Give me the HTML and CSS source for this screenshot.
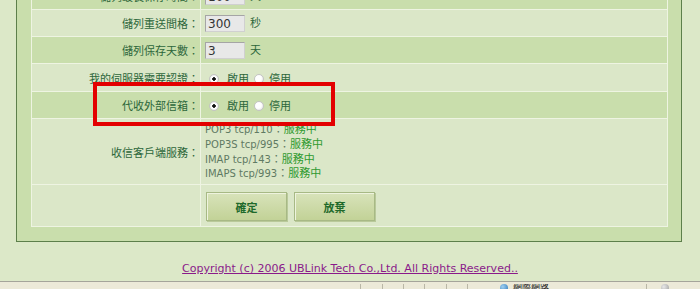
FILE: index.html
```html
<!DOCTYPE html>
<html lang="zh-Hant">
<head>
  <meta charset="UTF-8" />
  <title>郵件伺服器設定</title>
  <link rel="stylesheet" href="styles.css">
</head>
<body>
  <div class="panel">
    <table class="settings">
      <tr class="alt">
        <th>儲列最長保存時間：</th>
        <td><input type="text" class="box" value="100" /> 天</td>
      </tr>
      <tr>
        <th>儲列重送間格：</th>
        <td><input type="text" class="box" value="300" /> 秒</td>
      </tr>
      <tr class="alt">
        <th>儲列保存天數：</th>
        <td><input type="text" class="box" value="3" /> 天</td>
      </tr>
      <tr class="row27">
        <th>我的伺服器需要認證：</th>
        <td><label><input type="radio" name="auth" checked />啟用</label><label class="off"><input type="radio" name="auth" />停用</label></td>
      </tr>
      <tr class="alt">
        <th>代收外部信箱：</th>
        <td><label><input type="radio" name="fetch" checked />啟用</label><label class="off"><input type="radio" name="fetch" />停用</label></td>
      </tr>
      <tr class="services">
        <th>收信客戶端服務：</th>
        <td>
          <div>POP3 tcp/110<span class="cjk">：</span><span class="ok">服務中</span></div>
          <div>POP3S tcp/995<span class="cjk">：</span><span class="ok">服務中</span></div>
          <div>IMAP tcp/143<span class="cjk">：</span><span class="ok">服務中</span></div>
          <div>IMAPS tcp/993<span class="cjk">：</span><span class="ok">服務中</span></div>
        </td>
      </tr>
      <tr class="actions">
        <th></th>
        <td><button>確定</button><button>放棄</button></td>
      </tr>
    </table>
    <div class="highlight"></div>
  </div>

  <p class="footer"><a href="#">Copyright (c) 2006 UBLink Tech Co.,Ltd. All Rights Reserved..</a></p>

  <div class="statusbar">
    <span class="cell wide"></span>
    <span class="cell"></span>
    <span class="cell"></span>
    <span class="cell"></span>
    <span class="cell"></span>
    <span class="cell"></span>
    <span class="cell zone"><span class="globe"></span>網際網路</span>
    <span class="cell last"><span class="globe grey"></span></span>
  </div>
</body>
</html>
```

FILE: styles.css
```css
html, body {
  margin: 0;
  padding: 0;
  height: 289px;
  overflow: hidden;
}

body {
  background: #dce8c8;
  font-family: 'Liberation Sans', 'Noto Sans CJK TC', sans-serif;
  font-size: 11px;
  color: #2c663a;
}

.panel {
  position: relative;
  margin: -32px 0 0 16px;
  width: 666px;
  padding: 14px 13px 14px 14px;
  box-sizing: border-box;
  background: #c9deac;
  border: 1px solid #5d7f4b;
  border-top: none;
}

.settings {
  width: 100%;
  border-spacing: 1px;
  background: #eef4e2;
}

.settings th,
.settings td {
  height: 26px;
  padding: 0;
  background: #dbe7c8;
  vertical-align: middle;
}

.settings th {
  width: 167px;
  text-align: right;
  font-weight: normal;
  padding-right: 1px;
  color: #2c663a;
}

.settings td {
  padding-left: 4px;
  color: #2c663a;
}

.settings .alt th,
.settings .alt td {
  background: #c9deac;
}

.settings .row27 th,
.settings .row27 td {
  height: 27px;
}

.box {
  width: 40px;
  height: 17px;
  box-sizing: border-box;
  margin: 0 2px 0 0;
  padding: 0 2px;
  font: 12px 'DejaVu Sans', sans-serif;
  color: #333;
  background: #e8e8e8;
  border: 1px solid #a5a5a5;
  border-right-color: #d0d0d0;
  border-bottom-color: #d0d0d0;
  vertical-align: middle;
}

input[type="radio"] {
  appearance: none;
  box-sizing: border-box;
  width: 10px;
  height: 10px;
  margin: 0 8px 0 4px;
  border-radius: 50%;
  background: radial-gradient(circle at 40% 40%, #ffffff 45%, #d6d6d6 100%);
  border: 1px solid #c4c4c4;
  vertical-align: -1px;
}

input[type="radio"]:checked {
  background: radial-gradient(circle, #111 0 1.5px, #ffffff 2px 45%, #d6d6d6 100%);
}

.off input[type="radio"] {
  margin-left: 5px;
  margin-right: 5px;
}

.services th,
.services td {
  height: 65px;
}

.services td {
  font-family: 'DejaVu Sans', 'Noto Sans CJK TC', sans-serif;
  font-size: 10px;
  line-height: 13.7px;
  color: #5f7a63;
}

.services .cjk,
.services .ok {
  font-family: 'Noto Sans CJK TC', sans-serif;
  font-size: 11px;
}

.services .ok {
  color: #2f9a2f;
}

.actions th,
.actions td {
  height: 39px;
}

.actions td {
  padding-left: 5px;
  padding-top: 2px;
}

.actions button {
  width: 81px;
  height: 29px;
  margin-right: 7px;
  font: bold 11px 'Liberation Sans', 'Noto Sans CJK TC', sans-serif;
  color: #1f6a2b;
  background: linear-gradient(#d8e3ba, #c2d297);
  border: 1px solid #a7b985;
  box-shadow: inset 1px 1px 0 #eef3de, 1px 1px 0 #b9c99a;
  cursor: pointer;
}

.highlight {
  position: absolute;
  left: 76px;
  top: 114px;
  width: 242px;
  height: 44px;
  box-sizing: border-box;
  border: 4px solid #e30000;
}

.footer {
  margin: 20px 0 0;
  text-align: center;
  font-family: 'DejaVu Sans', sans-serif;
  font-size: 11px;
}

.footer a {
  color: #8a1a8a;
}

.statusbar {
  position: absolute;
  left: 0;
  top: 281px;
  width: 700px;
  height: 8px;
  display: flex;
  background: #ece9d8;
  border-top: 1px solid #a5a49a;
  font-size: 9px;
  color: #222;
}

.statusbar .cell {
  width: 21px;
  border-left: 1px solid #b9b6a6;
  margin-top: 2px;
}

.statusbar .wide {
  width: 372px;
  border-left: none;
}

.statusbar .zone {
  width: 151px;
  padding-left: 32px;
  display: flex;
  gap: 5px;
  line-height: 9px;
  overflow: hidden;
}

.statusbar .last {
  padding-left: 14px;
  width: 40px;
}

.globe {
  display: inline-block;
  width: 8px;
  height: 8px;
  border-radius: 50%;
  background: radial-gradient(circle at 35% 35%, #9fd0f0, #2a74b8);
}

.globe.grey {
  background: radial-gradient(circle at 35% 35%, #e8e8e8, #9a9a9a);
}
```
